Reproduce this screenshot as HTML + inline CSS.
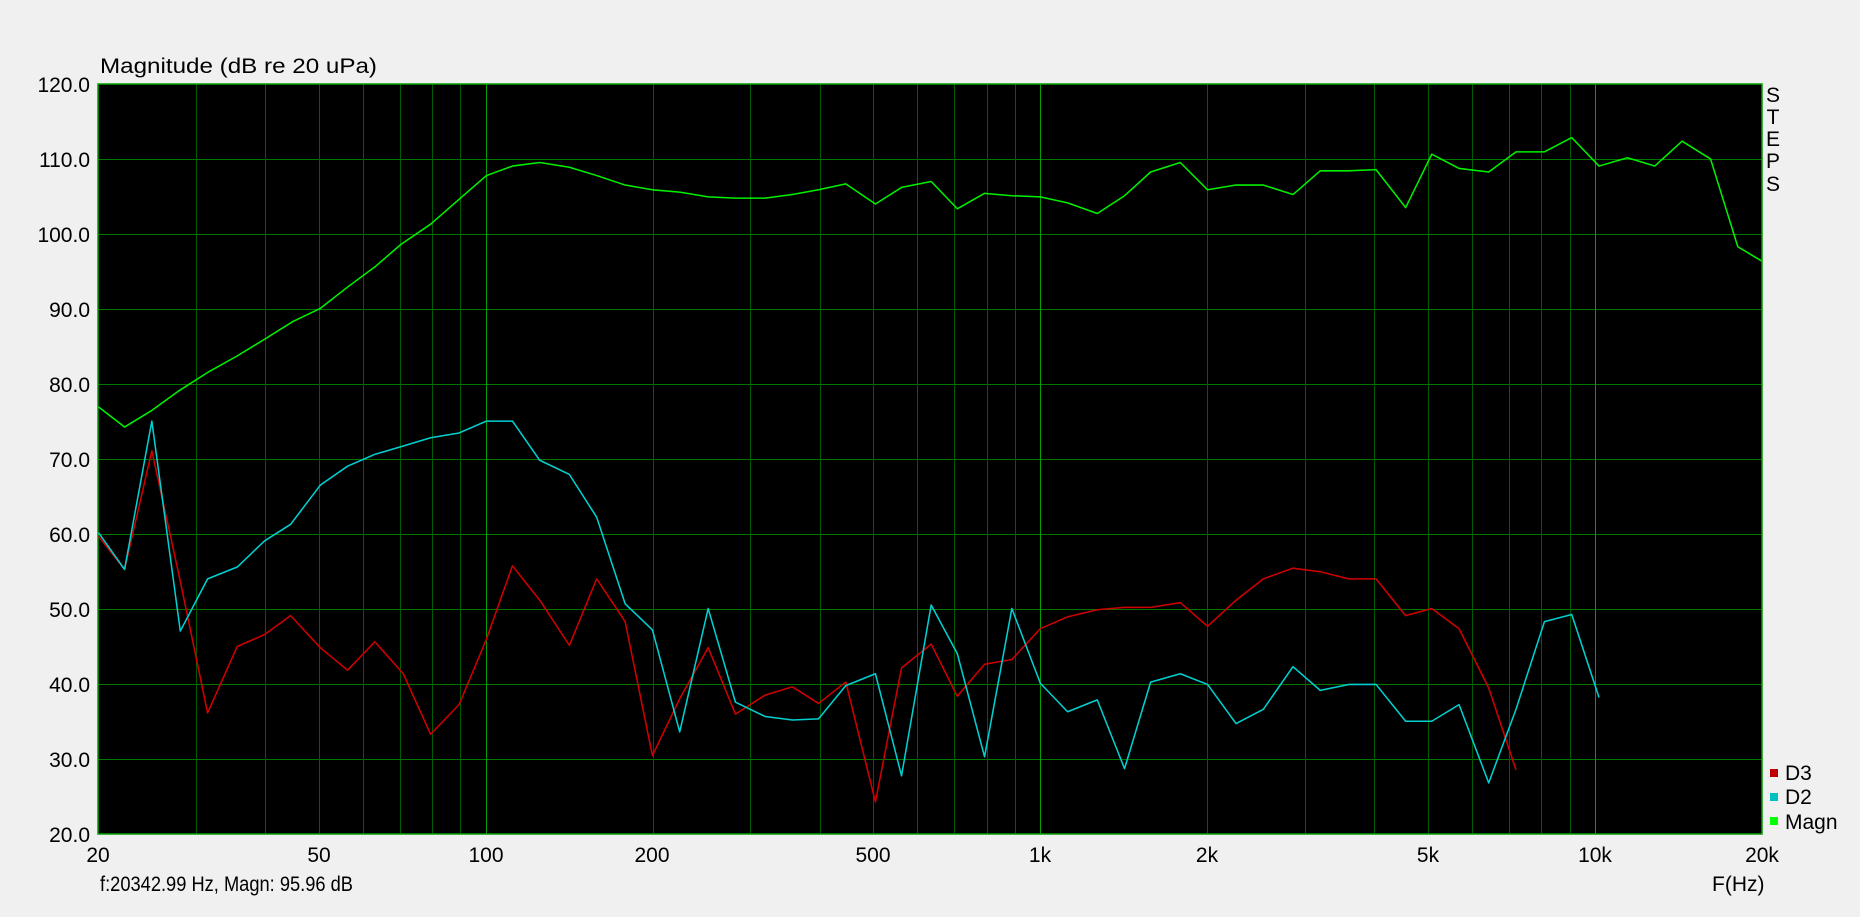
<!DOCTYPE html>
<html><head><meta charset="utf-8"><style>
html,body{margin:0;padding:0;background:#f0f0f0;}
svg{display:block;font-family:"Liberation Sans",Arial,sans-serif;}
</style></head><body>
<svg id="s" width="1860" height="917" xmlns="http://www.w3.org/2000/svg">
<rect width="1860" height="917" fill="#f0f0f0"/>
<rect x="98" y="84" width="1664" height="750" fill="#000"/>
<g id="grid"></g>
<rect x="98" y="84" width="1664" height="750" fill="none" stroke="#00a000" stroke-width="1.5"/>
<g font-size="21" fill="#000">
<text x="100" y="73" textLength="277" lengthAdjust="spacingAndGlyphs">Magnitude (dB re 20 uPa)</text>
<g text-anchor="end">
<text x="90" y="92">120.0</text><text x="90" y="167">110.0</text><text x="90" y="242">100.0</text>
<text x="90" y="317">90.0</text><text x="90" y="392">80.0</text><text x="90" y="467">70.0</text>
<text x="90" y="542">60.0</text><text x="90" y="617">50.0</text><text x="90" y="692">40.0</text>
<text x="90" y="767">30.0</text><text x="90" y="842">20.0</text>
</g>
<g text-anchor="middle">
<text x="98" y="862">20</text><text x="319" y="862">50</text><text x="486" y="862">100</text>
<text x="652" y="862">200</text><text x="873" y="862">500</text><text x="1040" y="862">1k</text>
<text x="1207" y="862">2k</text><text x="1428" y="862">5k</text><text x="1595" y="862">10k</text>
<text x="1762" y="862">20k</text>
<text x="1773" y="102">S</text><text x="1773" y="124">T</text><text x="1773" y="146">E</text>
<text x="1773" y="168">P</text><text x="1773" y="191">S</text>
</g>
<text x="100" y="891" textLength="253" lengthAdjust="spacingAndGlyphs">f:20342.99 Hz, Magn: 95.96 dB</text>
<text x="1712" y="891">F(Hz)</text>
<rect x="1770" y="769" width="8" height="8" fill="#c00000"/><text x="1785" y="780">D3</text>
<rect x="1770" y="793" width="8" height="8" fill="#00c0c0"/><text x="1785" y="804">D2</text>
<rect x="1770" y="817" width="8" height="8" fill="#00ff00"/><text x="1785" y="829">Magn</text>
</g>
<g transform="scale(1.18622)" fill="none" stroke-width="1.3" stroke-linejoin="round">
<polyline stroke="#d00000" points="83,452 105,480 128,380 152,490 175,601 200,545 223,535 245,519 270,546 293,565 316,541 340,568 363,619 387,594 410,539 432,477 455,506 480,544 503,488 527,524 550,637 573,589 597,546 620,602 645,586 668,579 690,593 713,575 738,676 760,563 785,543 807,587 830,560 853,556 877,530 900,520 925,514 948,512 970,512 995,508 1018,528 1042,506 1065,488 1090,479 1113,482 1137,488 1160,488 1185,519 1207,513 1230,530 1255,580 1278,649"/>
<polyline stroke="#00d0d0" points="83,449 105,480 128,355 152,532 175,488 200,478 223,456 245,442 270,409 293,393 316,383 340,376 363,369 387,365 410,355 432,355 455,388 480,400 503,436 527,509 550,531 573,617 597,513 620,592 645,604 668,607 690,606 713,578 738,568 760,654 785,510 807,551 830,638 853,513 877,576 900,600 925,590 948,648 970,575 995,568 1018,577 1042,610 1065,598 1090,562 1113,582 1137,577 1160,577 1185,608 1207,608 1230,594 1255,660 1278,598 1302,524 1325,518 1348,588"/>
<polyline stroke="#00f000" points="83,343 105,360 128,346 150,330 175,314 200,300 223,286 247,271 270,260 293,242 316,225 338,206 363,189 387,168 410,148 432,140 455,137 480,141 503,148 527,156 550,160 573,162 597,166 620,167 645,167 668,164 690,160 713,155 738,172 760,158 785,153 807,176 830,163 853,165 877,166 900,171 925,180 948,165 970,145 995,137 1018,160 1042,156 1065,156 1090,164 1113,144 1137,144 1160,143 1185,175 1207,130 1230,142 1255,145 1278,128 1302,128 1325,116 1348,140 1372,133 1395,140 1418,119 1442,134 1465,208 1485,220"/>
</g>
</svg>
<script>
var g=document.getElementById('grid'),ns='http://www.w3.org/2000/svg';
function ln(x1,y1,x2,y2,c){var l=document.createElementNS(ns,'line');l.setAttribute('x1',x1);l.setAttribute('y1',y1);l.setAttribute('x2',x2);l.setAttribute('y2',y2);l.setAttribute('stroke',c);l.setAttribute('stroke-width','1');g.appendChild(l);}
for(var i=1;i<10;i++){var y=84+75*i+0.5;ln(98,y,1762,y,'#007800');}
var fs=[];[10,100,1000,10000].forEach(function(d){for(var k=1;k<10;k++)fs.push(d*k);});
fs.forEach(function(f){if(f<=20||f>=20000)return;var x=Math.round(98+554.67*Math.log10(f/20))+0.5;var maj=(f==100||f==1000||f==10000);ln(x,84,x,834,maj?'#00a000':'#005c00');});
</script>
</body></html>
